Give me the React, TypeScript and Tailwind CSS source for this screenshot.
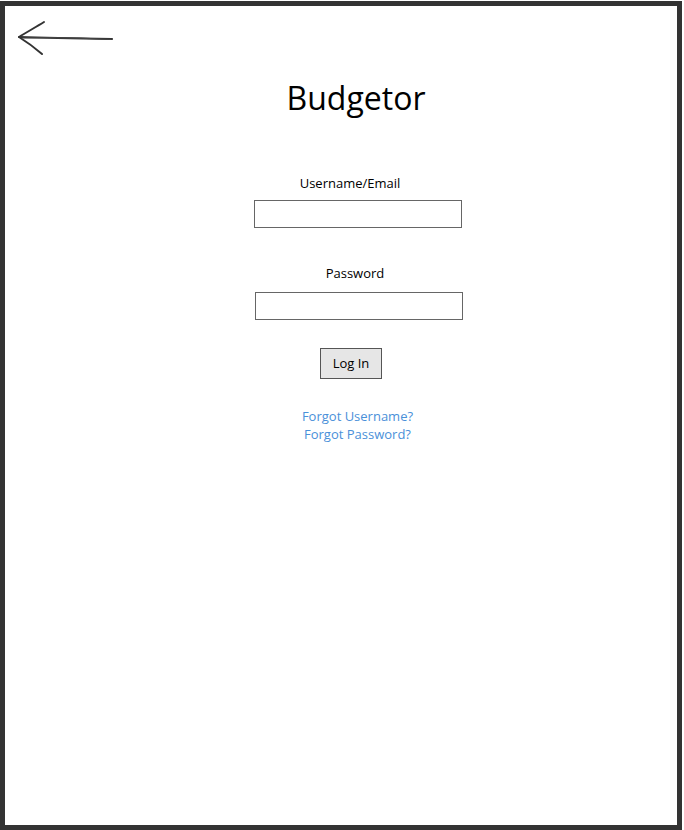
import { useState } from 'react'

function BackArrow() {
  return (
    <svg width="100" height="40" viewBox="0 0 100 40" fill="none" className="block">
      <path d="M3 17 C 30 18, 60 18.5, 95 19" stroke="#333" strokeWidth="2.2" strokeLinecap="round" />
      <path d="M6 18 C 40 17, 70 18, 94 19.5" stroke="#444" strokeWidth="1.2" strokeLinecap="round" />
      <path d="M27 2 C 19 7, 10 12, 2 17" stroke="#333" strokeWidth="2" strokeLinecap="round" />
      <path d="M2 17 C 10 22, 18 28, 25 34" stroke="#333" strokeWidth="2" strokeLinecap="round" />
    </svg>
  )
}

export default function App() {
  const [user, setUser] = useState('')
  const [pass, setPass] = useState('')

  return (
    <div className="w-[684px] h-[830px] bg-white pt-[1px]" style={{ fontFamily: "'Open Sans', 'Noto Sans', sans-serif" }}>
      <div className="w-[682px] h-[829px] border-[5px] border-[#333] bg-white relative">
        {/* back */}
        <div className="absolute left-[12px] top-[14px]">
          <BackArrow />
        </div>

        <div className="flex flex-col items-center pl-[30px] pt-[72px]">
          <h1 className="text-[32px] leading-[40px] text-black">Budgetor</h1>

          <label className="mt-[56px] mr-[12px] text-[13px] leading-[18px] text-black">Username/Email</label>
          <input
            value={user}
            onChange={e => setUser(e.target.value)}
            className="mt-[8px] ml-[4px] w-[208px] h-[28px] border border-[#666] bg-white outline-none px-1 text-[13px]"
          />

          <label className="mt-[36px] mr-[2px] text-[13px] leading-[18px] text-black">Password</label>
          <input
            type="password"
            value={pass}
            onChange={e => setPass(e.target.value)}
            className="mt-[10px] ml-[6px] w-[208px] h-[28px] border border-[#666] bg-white outline-none px-1 text-[13px]"
          />

          <button className="mt-[28px] mr-[10px] w-[62px] h-[31px] border border-[#555] bg-[#e6e6e6] text-[13px] text-black">
            Log In
          </button>

          <div className="mt-[28px] ml-[3px] flex flex-col items-center text-[13px] leading-[18px] text-[#4a90d9]">
            <a href="#">Forgot Username?</a>
            <a href="#">Forgot Password?</a>
          </div>
        </div>
      </div>
    </div>
  )
}
